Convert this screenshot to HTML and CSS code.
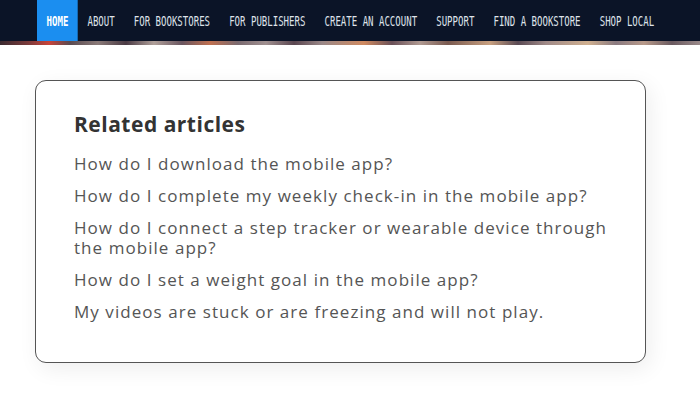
FILE: index.html
```html
<!DOCTYPE html>
<html lang="en">
<head>
<meta charset="utf-8">
<title>Related articles</title>
<link rel="stylesheet" href="styles.css">
</head>
<body>
<header class="site-header">
  <nav class="main-nav">
    <ul class="nav-list">
      <li class="nav-item active"><a href="#">HOME</a></li>
      <li class="nav-item"><a href="#">ABOUT</a></li>
      <li class="nav-item"><a href="#">FOR BOOKSTORES</a></li>
      <li class="nav-item"><a href="#">FOR PUBLISHERS</a></li>
      <li class="nav-item"><a href="#">CREATE AN ACCOUNT</a></li>
      <li class="nav-item"><a href="#">SUPPORT</a></li>
      <li class="nav-item"><a href="#">FIND A BOOKSTORE</a></li>
      <li class="nav-item"><a href="#">SHOP LOCAL</a></li>
    </ul>
  </nav>
  <div class="hero-strip"></div>
</header>
<main class="content">
  <section class="related-card">
    <h2 class="related-title">Related articles</h2>
    <ul class="related-list">
      <li><a href="#">How do I download the mobile app?</a></li>
      <li><a href="#">How do I complete my weekly check-in in the mobile app?</a></li>
      <li><a href="#">How do I connect a step tracker or wearable device through the mobile app?</a></li>
      <li><a href="#">How do I set a weight goal in the mobile app?</a></li>
      <li><a href="#">My videos are stuck or are freezing and will not play.</a></li>
    </ul>
  </section>
</main>
</body>
</html>
```

FILE: styles.css
```css
html, body {
  margin: 0;
  padding: 0;
  background: #ffffff;
}

body {
  font-family: "Open Sans", "Noto Sans", sans-serif;
}

.site-header {
  background: #0b1427;
}

.main-nav {
  height: 41px;
  overflow: hidden;
  padding-left: 37px;
}

.nav-list {
  list-style: none;
  margin: 0;
  padding: 0;
  display: flex;
  height: 41px;
  transform: scaleX(0.646);
  transform-origin: left center;
}

.nav-item a {
  display: flex;
  align-items: center;
  height: 41px;
  padding: 0 14.8px;
  color: #dfe3ea;
  text-decoration: none;
  font-family: "DejaVu Sans Mono", "Liberation Mono", monospace;
  font-size: 14px;
  white-space: nowrap;
}

.nav-item.active a {
  background: #1b8ef0;
  color: #ffffff;
  font-weight: bold;
}

.hero-strip {
  height: 4px;
  background: linear-gradient(90deg,
    #3a2a30 0%, #7a3a3a 4%, #c8443a 7%, #5a4a50 10%, #8a7a78 14%,
    #4a3a44 18%, #b0a09a 22%, #6a5660 26%, #c07050 30%, #7a6a70 34%,
    #a09090 38%, #5a4650 42%, #9a8888 46%, #d08a60 52%, #6a5058 56%,
    #b09a92 60%, #7a5a50 64%, #c8a080 70%, #5a4a54 74%, #a08a88 78%,
    #d0b090 84%, #8a7a80 88%, #b89a8a 92%, #6a5a60 96%, #9a8a8a 100%);
}

.content {
  padding: 35px 0 40px 35px;
}

.related-card {
  width: 611px;
  box-sizing: border-box;
  border: 1.5px solid #555555;
  border-radius: 11px;
  background: #ffffff;
  padding: 31px 36px 28px 38px;
  box-shadow: 4px 6px 22px rgba(0, 0, 0, 0.07);
}

.related-title {
  margin: 0 0 18px 0;
  font-size: 21px;
  line-height: 24px;
  font-weight: 700;
  letter-spacing: 0.5px;
  color: #333333;
}

.related-list {
  list-style: none;
  margin: 0;
  padding: 0;
}

.related-list li {
  margin: 0 0 12px 0;
  font-size: 17px;
  line-height: 20px;
  letter-spacing: 1.05px;
}

.related-list a {
  color: #555555;
  text-decoration: none;
}
```
